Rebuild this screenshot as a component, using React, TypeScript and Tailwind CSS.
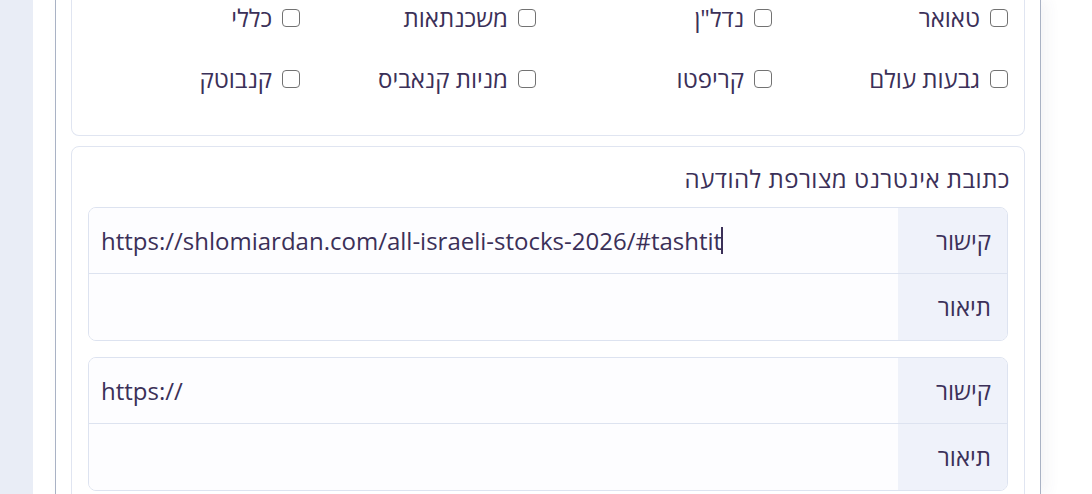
import React from "react";

// קטגוריות, לפי סדר העמודות מימין לשמאל
const categories = [
  "טאואר",
  'נדל"ן',
  "משכנתאות",
  "כללי",
  "גבעות עולם",
  "קריפטו",
  "מניות קנאביס",
  "קנבוטק",
];

function CheckItem({ label }: { label: string }) {
  return (
    <label className="flex items-center gap-[10px] h-[36px]">
      <span className="w-[18px] h-[18px] shrink-0 rounded-[4px] border-[1.5px] border-[#727272] bg-white"></span>
      <span>{label}</span>
    </label>
  );
}

function LinkGroup({ url, caret }: { url: string; caret?: boolean }) {
  return (
    <div className="border border-[#dde3f0] rounded-[8px] overflow-hidden">
      <div className="flex h-[66px] border-b border-[#dde3f0]">
        <div className="w-[109px] shrink-0 bg-[#eff2fa] flex items-center pr-[16px]">
          קישור
        </div>
        <div dir="ltr" className="flex-1 flex items-center pl-[12px] bg-[#fdfdff]">
          <span>{url}</span>
          {caret && <span className="w-[2px] h-[27px] bg-[#3b3058] -ml-[1px]"></span>}
        </div>
      </div>
      <div className="flex h-[66px]">
        <div className="w-[109px] shrink-0 bg-[#eff2fa] flex items-center pr-[16px]">
          תיאור
        </div>
        <div className="flex-1 bg-[#fdfdff]"></div>
      </div>
    </div>
  );
}

export default function App() {
  return (
    <div
      className="h-[494px] overflow-hidden bg-white flex text-[24px] leading-[36px] text-[#3b3058]"
      style={{ fontFamily: '"Open Sans", "Noto Sans", "DejaVu Sans", sans-serif' }}
    >
      {/* פס צד */}
      <div className="w-[33px] shrink-0 bg-[#e9edf6]"></div>
      <div className="w-[22px] shrink-0"></div>

      <main
        dir="rtl"
        className="w-[986px] shrink-0 border-x border-[#a9b2c4] px-[15px] shadow-[6px_0_14px_rgba(60,70,110,0.06)]"
      >
        {/* כרטיס קטגוריות */}
        <div className="border border-t-0 border-[#e0e5f1] rounded-b-[8px] px-[16px] pb-[38px]">
          <div className="grid grid-cols-4 gap-x-6 gap-y-[25px]">
            {categories.map((c) => (
              <CheckItem key={c} label={c} />
            ))}
          </div>
        </div>

        {/* כרטיס קישורים */}
        <div className="mt-[10px] border border-[#e0e5f1] rounded-[8px] px-[16px] pt-[14px] pb-[16px]">
          <h2 className="mb-[10px] font-medium tracking-[0.5px] -mr-[2px]">
            כתובת אינטרנט מצורפת להודעה
          </h2>
          <div className="flex flex-col gap-[16px]">
            <LinkGroup url="https://shlomiardan.com/all-israeli-stocks-2026/#tashtit" caret />
            <LinkGroup url="https://" />
          </div>
        </div>
      </main>
    </div>
  );
}
